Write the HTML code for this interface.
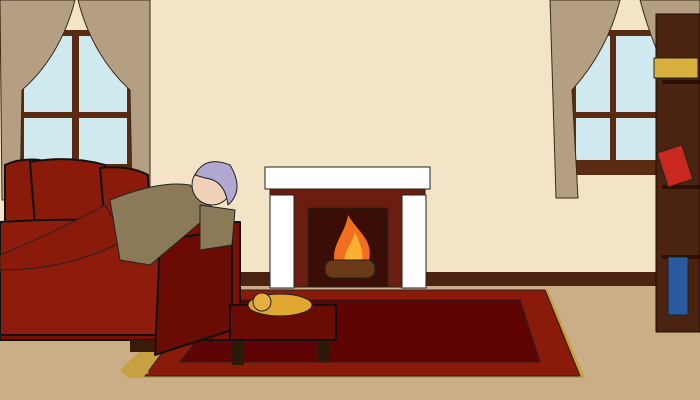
<!DOCTYPE html>
<html><head><style>html,body{margin:0;padding:0;width:700px;height:400px;overflow:hidden}</style></head><body>
<svg width="700" height="400" viewBox="0 0 700 400" xmlns="http://www.w3.org/2000/svg" stroke-linejoin="round">
<rect width="700" height="400" fill="#f3e4c8"/>
<rect y="285" width="700" height="115" fill="#c9ae88"/>
<rect y="272" width="700" height="14" fill="#4a2410"/>
<!-- left window -->
<rect x="18" y="30" width="115" height="170" fill="#5a2a12"/>
<rect x="24" y="36" width="48" height="76" fill="#cfe9ef"/><rect x="79" y="36" width="48" height="76" fill="#cfe9ef"/>
<rect x="24" y="118" width="48" height="46" fill="#cfe9ef"/><rect x="79" y="118" width="48" height="46" fill="#cfe9ef"/>
<path d="M0 0H75C65 40 45 70 22 90L20 200H2Z" fill="#b59f82" stroke="#3a2a1a"/>
<path d="M150 0H78C88 40 108 70 130 90L132 190H150Z" fill="#b59f82" stroke="#3a2a1a"/>
<!-- right window -->
<rect x="570" y="30" width="90" height="145" fill="#5a2a12"/>
<rect x="576" y="36" width="34" height="76" fill="#cfe9ef"/><rect x="616" y="36" width="40" height="76" fill="#cfe9ef"/>
<rect x="576" y="118" width="34" height="42" fill="#cfe9ef"/><rect x="616" y="118" width="40" height="42" fill="#cfe9ef"/>
<path d="M550 0H620C610 40 590 70 572 90L578 198H556Z" fill="#b59f82" stroke="#3a2a1a"/>
<path d="M700 0H640C648 30 660 60 670 80V200H700Z" fill="#b59f82" stroke="#3a2a1a"/>
<!-- bookshelf -->
<rect x="656" y="14" width="44" height="318" fill="#4a2410" stroke="#1a0a00"/>
<rect x="662" y="80" width="38" height="4" fill="#2a1000"/><rect x="662" y="185" width="38" height="4" fill="#2a1000"/><rect x="662" y="255" width="38" height="4" fill="#2a1000"/>
<rect x="654" y="58" width="44" height="20" fill="#d8b040" stroke="#222"/>
<rect x="662" y="148" width="26" height="36" fill="#c8281e" stroke="#222" transform="rotate(-18 675 166)"/>
<rect x="668" y="257" width="20" height="58" fill="#2a5aa0" stroke="#222"/>
<!-- rug -->
<path d="M120 370L128 378H585L548 290H205Z" fill="#c9a040"/>
<path d="M145 376L208 290H545L580 376Z" fill="#8a1a0a" stroke="#222"/>
<path d="M180 362L228 300H520L540 362Z" fill="#5e0404" stroke="#222"/>
<!-- fireplace -->
<rect x="270" y="185" width="155" height="102" fill="#6b1d10" stroke="#222"/>
<rect x="308" y="208" width="80" height="79" fill="#3a0e06" stroke="#222"/>
<path d="M335 265C330 245 345 235 348 215C360 235 375 240 368 265Z" fill="#f07020"/>
<path d="M345 265C342 252 352 245 355 232C362 248 365 255 360 265Z" fill="#fbb030"/>
<rect x="325" y="260" width="50" height="18" rx="8" fill="#6a3a18" stroke="#222"/>
<rect x="265" y="167" width="165" height="22" fill="#fff" stroke="#222"/>
<rect x="270" y="195" width="24" height="93" fill="#fff" stroke="#222"/>
<rect x="402" y="195" width="24" height="93" fill="#fff" stroke="#222"/>
<!-- sofa -->
<path d="M5 165Q20 158 40 160L45 225H5Z" fill="#8a1a0a" stroke="#111" stroke-width="2"/>
<path d="M30 162Q70 155 105 165L110 225H35Z" fill="#8a1a0a" stroke="#111" stroke-width="2"/>
<path d="M100 168Q130 165 148 175L150 225H105Z" fill="#8a1a0a" stroke="#111" stroke-width="2"/>
<path d="M0 222H240V340H0Z" fill="#7a1005" stroke="#111" stroke-width="2"/>
<path d="M0 222Q120 215 170 230L165 335H0Z" fill="#8e1c0c" stroke="#111" stroke-width="2"/>
<path d="M160 240L232 230V330L155 355Z" fill="#6a0c04" stroke="#111" stroke-width="2"/>
<rect x="130" y="340" width="25" height="12" fill="#3a1a0a"/>
<!-- legs -->
<path d="M0 255Q60 230 105 205L125 240Q70 270 0 270Z" fill="#8a1a0a" stroke="#222"/>
<!-- grandma -->
<path d="M110 200Q160 180 190 185L215 210Q180 240 150 265L120 260Z" fill="#8a7a58" stroke="#222"/>
<path d="M200 205L235 210L232 245L200 250Z" fill="#8a7a58" stroke="#222"/>
<circle cx="212" cy="185" r="20" fill="#f0d2b8" stroke="#222"/>
<path d="M195 175Q205 155 230 165Q245 190 228 205Q225 180 205 178Z" fill="#b0a8d0" stroke="#222"/>
<!-- ottoman -->
<rect x="232" y="340" width="12" height="25" fill="#2a1a0a"/><rect x="318" y="340" width="12" height="22" fill="#2a1a0a"/>
<path d="M230 305H336V340H230Z" fill="#6a0c04" stroke="#111" stroke-width="2"/>
<ellipse cx="280" cy="305" rx="32" ry="11" fill="#e0a830" stroke="#222"/>
<circle cx="262" cy="302" r="9" fill="#e6b040" stroke="#222"/>
<path d="M126 366L150 362L148 374L122 373Z" fill="#c9a040"/>
</svg>
</body></html>
